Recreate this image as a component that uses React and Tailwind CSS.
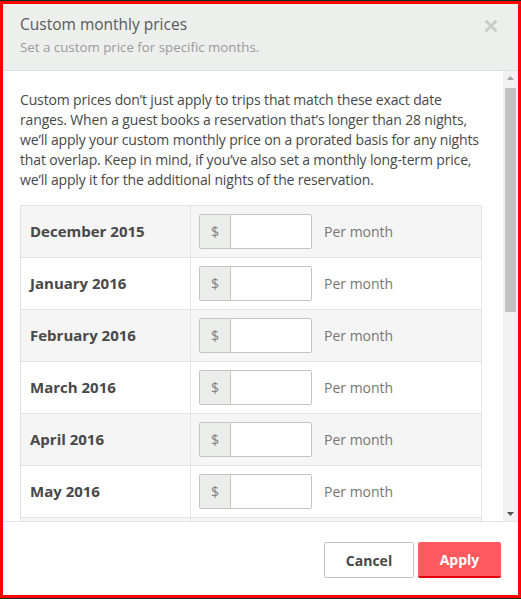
import React from "react";

const months = [
  "December 2015",
  "January 2016",
  "February 2016",
  "March 2016",
  "April 2016",
  "May 2016",
];

function Row({ label, shaded }) {
  return (
    <div
      className={`flex h-[52px] shrink-0 border-b border-[#e4e4e4] ${shaded ? "bg-[#f5f5f5]" : "bg-white"}`}
    >
      <div className="flex w-[170px] shrink-0 items-center border-r border-[#e4e4e4] pl-[9px] text-[15px] font-bold text-[#484848]">
        {label}
      </div>
      <div className="flex items-center pl-[8px]">
        <div className="flex h-[35px] w-[113px] overflow-hidden rounded-[2px] border border-[#c4c4c4] bg-white">
          <div className="flex w-[31px] shrink-0 items-center justify-center border-r border-[#c4c4c4] bg-[#ebedeb] text-[14px] text-[#7b7f80]">
            $
          </div>
          <input className="min-w-0 flex-1 bg-white outline-none" />
        </div>
        <span className="ml-[12px] text-[14px] text-[#767676]">Per month</span>
      </div>
    </div>
  );
}

export default function App() {
  return (
    <div
      className="flex h-[599px] w-[521px] flex-col border-y border-[#222] bg-white"
      style={{ fontFamily: '"Open Sans", "Liberation Sans", Arial, sans-serif' }}
    >
      <div className="flex min-h-0 flex-1 flex-col border-[3px] border-[#ff0000]">
        {/* Header */}
        <div className="flex h-[67px] shrink-0 items-start justify-between border-b border-[#dce0e0] bg-[#edefed] pl-[17px] pr-[20px] pt-[9px]">
          <div>
            <div className="text-[15.5px] leading-[22px] text-[#565a5c]">Custom monthly prices</div>
            <div className="mt-[3px] text-[13.3px] leading-[18px] text-[#9a9a9a]">
              Set a custom price for specific months.
            </div>
          </div>
          <svg width="14" height="14" viewBox="0 0 14 14" className="mt-[6px]">
            <path d="M1.5 1.5 L12.5 12.5 M12.5 1.5 L1.5 12.5" stroke="#c8cac8" strokeWidth="2.6" strokeLinecap="butt" />
          </svg>
        </div>

        {/* Body */}
        <div className="flex min-h-0 flex-1">
          <div className="min-w-0 flex-1 overflow-hidden pl-[17px] pr-[21px] pt-[19px]">
            <p className="whitespace-nowrap text-[14px] leading-[20px] tracking-[-0.15px] text-[#484848]">
              Custom prices don’t just apply to trips that match these exact date
              <br />
              ranges. When a guest books a reservation that’s longer than 28 nights,
              <br />
              we’ll apply your custom monthly price on a prorated basis for any nights
              <br />
              that overlap. Keep in mind, if you’ve also set a monthly long-term price,
              <br />
              we’ll apply it for the additional nights of the reservation.
            </p>
            <div className="mt-[15px] flex flex-col border-x border-t border-[#e4e4e4]">
              {months.map((m, i) => (
                <Row key={m} label={m} shaded={i % 2 === 0} />
              ))}
              <div className="flex h-[52px] shrink-0 bg-[#f5f5f5]">
                <div className="w-[170px] shrink-0 border-r border-[#e4e4e4]" />
              </div>
            </div>
          </div>
          {/* scrollbar */}
          <div className="flex w-[15px] shrink-0 flex-col items-center bg-[#f1f1f1] py-[5px]">
            <svg width="7" height="4" viewBox="0 0 7 4">
              <path d="M0 4 L3.5 0 L7 4 Z" fill="#a3a3a3" />
            </svg>
            <div className="mt-[8px] h-[224px] w-[11px] bg-[#c1c1c1]" />
            <div className="flex-1" />
            <svg width="7" height="4" viewBox="0 0 7 4">
              <path d="M0 0 L7 0 L3.5 4 Z" fill="#505050" />
            </svg>
          </div>
        </div>

        {/* Footer */}
        <div className="flex h-[74px] shrink-0 items-start justify-end gap-[4px] border-t border-[#e4e4e4] bg-white pr-[17px] pt-[20px]">
          <button className="flex h-[36px] w-[90px] items-center justify-center rounded-[2px] border border-[#c4c4c4] bg-white text-[14px] font-bold text-[#484848]">
            Cancel
          </button>
          <button className="flex h-[36px] w-[83px] items-center justify-center rounded-[2px] border-b-2 border-[#e00007] bg-[#ff5a5f] text-[14px] font-bold text-white">
            Apply
          </button>
        </div>
      </div>
    </div>
  );
}
